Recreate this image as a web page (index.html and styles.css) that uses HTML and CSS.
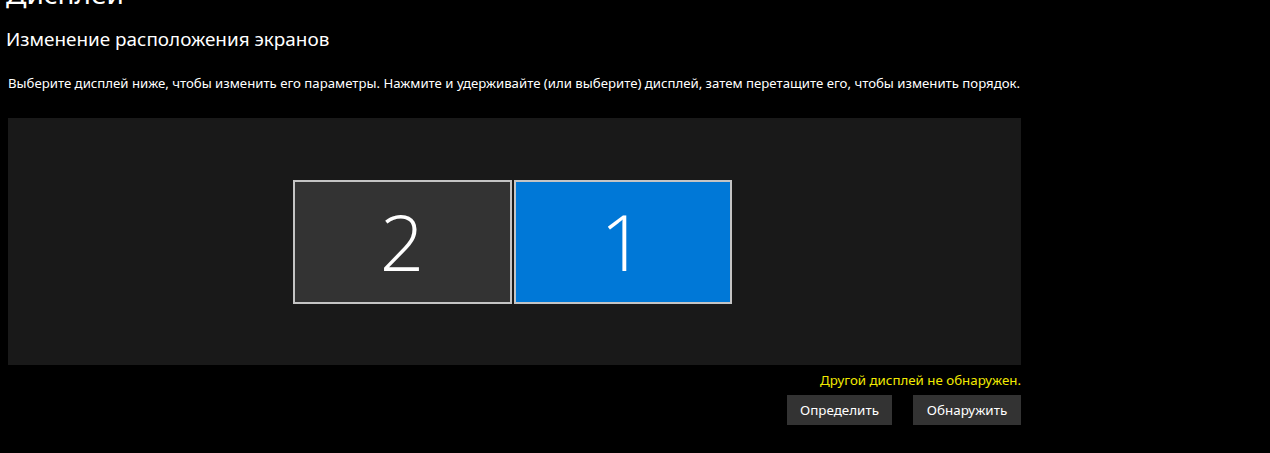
FILE: index.html
```html
<!DOCTYPE html>
<html lang="ru">
<head>
<meta charset="utf-8">
<link rel="stylesheet" href="styles.css">
</head>
<body>
<div class="page">
  <h1 class="title">Дисплей</h1>
  <h2 class="subtitle">Изменение расположения экранов</h2>
  <p class="desc">Выберите дисплей ниже, чтобы изменить его параметры. Нажмите и удерживайте (или выберите) дисплей, затем перетащите его, чтобы изменить порядок.</p>
  <div class="canvas">
    <div class="monitors">
      <div class="monitor">2</div>
      <div class="monitor selected">1</div>
    </div>
  </div>
  <div class="status">Другой дисплей не обнаружен.</div>
  <div class="actions">
    <button class="btn btn-identify">Определить</button>
    <button class="btn btn-detect">Обнаружить</button>
  </div>
</div>
</body>
</html>
```
FILE: styles.css
```css
html, body {
  margin: 0;
  padding: 0;
  background: #000;
  color: #fff;
  font-family: "Noto Sans", "Open Sans", sans-serif;
  overflow: hidden;
}
.page {
  width: 1013px;
  padding-left: 8px;
}
.title {
  margin: -27px 0 0 -2px;
  font-size: 28px;
  font-weight: 400;
  line-height: 40px;
}
.subtitle {
  margin: 0 0 0 -2px;
  padding-top: 14px;
  font-size: 18.9px;
  font-weight: 400;
  line-height: 24px;
}
.desc {
  margin: 0;
  padding-top: 23px;
  font-size: 13.2px;
  line-height: 18px;
  white-space: nowrap;
}
.canvas {
  margin-top: 26px;
  height: 247px;
  background: #191919;
  display: flex;
  justify-content: center;
  align-items: flex-start;
}
.monitors {
  display: flex;
  gap: 2px;
  margin-top: 62px;
  margin-left: -5px;
}
.monitor {
  box-sizing: border-box;
  width: 219px;
  height: 124px;
  border: 2px solid #c4c4c4;
  background: #333333;
  display: flex;
  align-items: center;
  justify-content: center;
  font-family: "Open Sans", sans-serif;
  font-weight: 300;
  font-size: 78px;
  line-height: 1;
  padding-bottom: 2px;
}
.monitor.selected {
  width: 218px;
  background: #0078d7;
}
.status {
  text-align: right;
  color: #f2ea00;
  font-size: 13.3px;
  line-height: 18px;
  margin-top: 6px;
}
.actions {
  display: flex;
  justify-content: flex-end;
  gap: 21px;
  margin-top: 6px;
}
.btn {
  height: 30px;
  border: 0;
  background: #333333;
  color: #fff;
  font-family: "Noto Sans", sans-serif;
  font-size: 13.4px;
  padding: 0;
}
.btn-identify { width: 105px; }
.btn-detect { width: 108px; }
```
